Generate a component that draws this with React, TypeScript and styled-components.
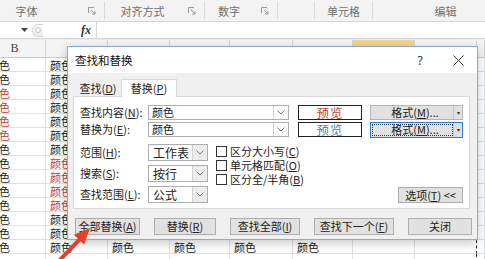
import React from 'react';
import styled, { createGlobalStyle } from 'styled-components';

const GlobalStyle = createGlobalStyle`
  * { box-sizing: border-box; }
  html, body { margin: 0; padding: 0; }
  body {
    width: 485px;
    height: 259px;
    overflow: hidden;
    background: #fff;
    color: #222;
    font-family: "Noto Sans CJK SC", "Noto Sans", sans-serif;
    font-size: 11px;
  }
`;

const Screen = styled.div`
  position: relative;
  width: 485px;
  height: 259px;
  overflow: hidden;
  background: #fff;
`;

/* ribbon group captions */
const RibbonLabels = styled.div`
  display: flex;
  height: 22px;
  background: #f3f3f3;
  border-bottom: 1px solid #d6d6d6;
  overflow: hidden;
`;
const Group = styled.div<{ $w: number; $shift?: number }>`
  flex: 0 0 ${p => p.$w}px;
  margin-left: ${p => p.$shift ?? 0}px;
  display: flex;
  align-items: center;
  border-right: 1px solid #dadada;
  margin-top: 2px;
  margin-bottom: 2px;
`;
const GroupLabel = styled.span`
  flex: 1;
  text-align: center;
  color: #707070;
  font-size: 11px;
  line-height: 14px;
`;
const Launcher = styled.span`
  flex: 0 0 24px;
  display: flex;
  justify-content: center;
`;

/* formula bar */
const FormulaBar = styled.div`
  display: flex;
  align-items: center;
  height: 17px;
  border-bottom: 1px solid #d6d6d6;
  background: #fff;
`;
const NameBox = styled.div`
  width: 30px;
  display: flex;
  justify-content: flex-end;
  padding-right: 2px;
`;
const Pill = styled.span`
  width: 11px;
  height: 13px;
  margin-left: 2px;
  border: 1px solid #d2d2d2;
  border-right: none;
  border-radius: 7px 0 0 7px;
  background: linear-gradient(#fdfdfd, #ececec);
  display: flex;
  align-items: center;
  justify-content: center;
  &::after {
    content: '';
    width: 4px;
    height: 4px;
    border-radius: 50%;
    border: 1px solid #c9c9c9;
  }
`;
const FxBox = styled.div`
  width: 54px;
  height: 100%;
  display: flex;
  align-items: center;
  justify-content: flex-end;
  padding-right: 5px;
  border-right: 1px solid #d6d6d6;
  font-family: "Liberation Serif", serif;
  font-style: italic;
  font-weight: bold;
  font-size: 12px;
  color: #333;
`;
const Gap = styled.div`
  height: 1px;
  background: #ececec;
`;

/* sheet grid: column B starts off-screen, so the row is shifted left */
const cols = '62px 62px 62px 60px 63px 60px 62px 62px 1fr';
const SheetRow = styled.div<{ $h: number }>`
  display: grid;
  grid-template-columns: ${cols};
  height: ${p => p.$h}px;
  margin-left: -16px;
`;
const HeadCell = styled.div<{ $sel?: boolean }>`
  display: flex;
  align-items: center;
  justify-content: center;
  background: ${p => (p.$sel ? '#f3d48c' : '#f4f4f4')};
  border-right: 1px solid #d5d5d5;
  border-bottom: 1px solid #c9c9c9;
  font-family: "Liberation Serif", serif;
  font-size: 12px;
  color: #444;
`;
const Cell = styled.div<{ $red?: boolean; $ants?: boolean }>`
  display: flex;
  align-items: center;
  border-right: ${p => (p.$ants ? '1px dashed #222' : '1px solid #dfe1e2')};
  border-bottom: 1px solid #dfe1e2;
  padding-left: 4px;
  overflow: hidden;
  white-space: nowrap;
  font-size: 11px;
  line-height: 12px;
  color: ${p => (p.$red ? '#c23c3c' : '#222')};
`;

/* dialog */
const Dialog = styled.div`
  position: absolute;
  left: 67px;
  top: 46px;
  width: 411px;
  height: 194px;
  display: flex;
  flex-direction: column;
  background: #f0f0f0;
  border: 1px solid #86acd6;
  box-shadow: 0 3px 10px rgba(0, 0, 0, 0.22);
  font-size: 11px;
  line-height: 13px;
`;
const TitleBar = styled.div`
  display: flex;
  align-items: center;
  height: 26px;
  padding-left: 7px;
  background: #fff;
  color: #111;
`;
const Title = styled.span`
  flex: 1;
  font-size: 11.5px;
`;
const TitleBtn = styled.span`
  width: 38px;
  display: flex;
  justify-content: center;
  align-items: center;
  font-family: "Noto Sans", sans-serif;
  font-size: 12px;
  color: #333;
`;
const Body = styled.div`
  flex: 1;
  display: flex;
  flex-direction: column;
  padding: 5px 7px 0 5px;
`;
const Tabs = styled.div`
  display: flex;
  align-items: flex-end;
  height: 18px;
  position: relative;
  z-index: 1;
`;
const Tab = styled.div<{ $active?: boolean; $w: number }>`
  width: ${p => p.$w}px;
  height: ${p => (p.$active ? 18 : 16)}px;
  margin-left: ${p => (p.$active ? 0 : 2)}px;
  display: flex;
  align-items: center;
  justify-content: center;
  background: ${p => (p.$active ? '#fff' : 'transparent')};
  border: 1px solid ${p => (p.$active ? '#d9d9d9' : 'transparent')};
  border-bottom: none;
  margin-bottom: ${p => (p.$active ? -1 : 0)}px;
`;
const Panel = styled.div`
  height: 113px;
  background: #fff;
  border: 1px solid #d9d9d9;
  padding: 8px 6px 0 6px;
`;
const Row = styled.div`
  display: flex;
  align-items: center;
  height: 15px;
  & + & {
    margin-top: 2px;
  }
`;
const Label = styled.span`
  width: 68px;
  white-space: nowrap;
`;
const Combo = styled.div<{ $w: number }>`
  width: ${p => p.$w}px;
  height: 100%;
  display: flex;
  align-items: center;
  border: 1px solid #abadb3;
  background: #fff;
`;
const ComboText = styled.span<{ $big?: boolean }>`
  flex: 1;
  padding-left: ${p => (p.$big ? 4 : 3)}px;
  font-size: ${p => (p.$big ? 12 : 11)}px;
  white-space: nowrap;
`;
const DropBtn = styled.span<{ $shade?: boolean }>`
  width: 15px;
  height: 100%;
  display: flex;
  align-items: center;
  justify-content: center;
  border-left: 1px solid #d4d4d4;
  background: ${p => (p.$shade ? '#ececec' : '#fff')};
`;
const Preview = styled.div<{ $color: string }>`
  width: 64px;
  height: 100%;
  margin-left: 9px;
  display: flex;
  align-items: center;
  justify-content: center;
  border: 1px solid #222;
  background: #fff;
  color: ${p => p.$color};
  font-size: 12.5px;
  letter-spacing: 1px;
`;
const FormatBtn = styled.div<{ $focus?: boolean }>`
  position: relative;
  width: 93px;
  height: ${p => (p.$focus ? 16 : 15)}px;
  margin-left: 8px;
  display: flex;
  align-items: center;
  background: #e1e1e1;
  border: 1px solid ${p => (p.$focus ? '#2a7fd4' : '#b4b4b4')};
  &::after {
    content: '';
    display: ${p => (p.$focus ? 'block' : 'none')};
    position: absolute;
    inset: 1px 9px 1px 1px;
    border: 1px dotted #333;
  }
`;
const FormatText = styled.span`
  flex: 1;
  text-align: center;
  padding-left: 6px;
  white-space: nowrap;
`;
const FormatDrop = styled.span`
  width: 9px;
  height: 100%;
  display: flex;
  align-items: center;
  justify-content: center;
  border-left: 1px solid #c8c8c8;
  font-size: 6px;
  color: #333;
`;
const Options = styled.div`
  display: flex;
  margin-top: 7px;
  height: 59px;
`;
const OptColumn = styled.div`
  display: flex;
  flex-direction: column;
  gap: 4px;
`;
const OptRow = styled.div`
  display: flex;
  align-items: center;
  height: 17px;
`;
const Checks = styled.div`
  display: flex;
  flex-direction: column;
  gap: 3px;
  margin-left: 8px;
  padding-top: 2px;
`;
const CheckRow = styled.div`
  display: flex;
  align-items: center;
  height: 11px;
  gap: 3px;
  white-space: nowrap;
`;
const Box = styled.span`
  width: 11px;
  height: 11px;
  border: 1px solid #333;
  background: #fff;
`;
const Button = styled.div<{ $w: number }>`
  width: ${p => p.$w}px;
  height: 17px;
  display: flex;
  align-items: center;
  justify-content: center;
  background: #e1e1e1;
  border: 1px solid #adadad;
  white-space: nowrap;
`;
const OptionsBtn = styled(Button)`
  margin-left: auto;
  align-self: flex-end;
  height: 16px;
`;
const ButtonRow = styled.div`
  display: flex;
  justify-content: space-between;
  margin: 9px -2px 0 2px;
`;
const Arrow = styled.svg`
  position: absolute;
  left: 50px;
  top: 222px;
`;

const Chevron = () => (
  <svg width="8" height="5" viewBox="0 0 8 5">
    <polyline points="0.5,0.5 4,4 7.5,0.5" fill="none" stroke="#777" strokeWidth="1" />
  </svg>
);

const LaunchIcon = () => (
  <svg width="8" height="8" viewBox="0 0 8 8">
    <path d="M0.5 6V0.5H6" fill="none" stroke="#999" />
    <path d="M3 3L7 7M7 4v3H4" fill="none" stroke="#999" />
  </svg>
);

const Mn: React.FC<{ k: string }> = ({ k }) => (
  <>
    (<u>{k}</u>)
  </>
);

const groups = [
  { w: 132, shift: -27, label: '字体', launch: true },
  { w: 100, label: '对齐方式', launch: true },
  { w: 73, label: '数字', launch: true },
  { w: 37, label: '' },
  { w: 58, label: '单元格' },
  { w: 146, label: '编辑' },
];

const heads = ['B', '', '', '', '', '', '', '', ''];

const selects = [
  { label: '范围', k: 'H', value: '工作表' },
  { label: '搜索', k: 'S', value: '按行' },
  { label: '查找范围', k: 'L', value: '公式' },
];

const checks = [
  { label: '区分大小写', k: 'C' },
  { label: '单元格匹配', k: 'O' },
  { label: '区分全/半角', k: 'B' },
];

const actions = [
  { label: '全部替换', k: 'A', w: 65 },
  { label: '替换', k: 'R', w: 62 },
  { label: '查找全部', k: 'I', w: 70 },
  { label: '查找下一个', k: 'F', w: 80 },
  { label: '关闭', w: 64 },
];

// rows above this one sit under the dialog except for columns B and C
const LAST_ROW = 13;

export default function App() {
  const rows = Array.from({ length: 15 }, (_, i) => i);
  return (
    <Screen>
      <GlobalStyle />
      <RibbonLabels>
        {groups.map((g, i) => (
          <Group key={i} $w={g.w} $shift={g.shift}>
            <GroupLabel>{g.label}</GroupLabel>
            {g.launch && (
              <Launcher>
                <LaunchIcon />
              </Launcher>
            )}
          </Group>
        ))}
      </RibbonLabels>
      <FormulaBar>
        <NameBox>
          <svg width="7" height="4" viewBox="0 0 7 4">
            <polygon points="0,0 7,0 3.5,4" fill="#444" />
          </svg>
        </NameBox>
        <Pill />
        <FxBox>fx</FxBox>
      </FormulaBar>
      <Gap />
      <SheetRow $h={18}>
        {heads.map((h, i) => (
          <HeadCell key={i} $sel={i === 6}>
            {h}
          </HeadCell>
        ))}
      </SheetRow>
      {rows.map(r => {
        const filled = r <= LAST_ROW;
        const below = r === LAST_ROW;
        return (
          <SheetRow key={r} $h={14}>
            <Cell $red={r >= 2 && r <= 5}>{filled && '颜色'}</Cell>
            <Cell $red={r >= 7 && r <= 10}>{filled && '颜色'}</Cell>
            <Cell>{below && '颜色'}</Cell>
            <Cell>{below && '颜色'}</Cell>
            <Cell>{below && '颜色'}</Cell>
            <Cell>{below && '颜色'}</Cell>
            <Cell />
            <Cell $ants />
            <Cell />
          </SheetRow>
        );
      })}

      <Dialog>
        <TitleBar>
          <Title>查找和替换</Title>
          <TitleBtn>?</TitleBtn>
          <TitleBtn>
            <svg width="11" height="11" viewBox="0 0 11 11">
              <path d="M0.5 0.5L10.5 10.5M10.5 0.5L0.5 10.5" stroke="#333" strokeWidth="1" />
            </svg>
          </TitleBtn>
        </TitleBar>
        <Body>
          <Tabs>
            <Tab $w={46}>
              查找<Mn k="D" />
            </Tab>
            <Tab $w={56} $active>
              替换<Mn k="P" />
            </Tab>
          </Tabs>
          <Panel>
            <Row>
              <Label>
                查找内容<Mn k="N" />:
              </Label>
              <Combo $w={141}>
                <ComboText>颜色</ComboText>
                <DropBtn>
                  <Chevron />
                </DropBtn>
              </Combo>
              <Preview $color="#c0413f">预览</Preview>
              <FormatBtn>
                <FormatText>
                  格式<Mn k="M" />...
                </FormatText>
                <FormatDrop>▾</FormatDrop>
              </FormatBtn>
            </Row>
            <Row>
              <Label>
                替换为<Mn k="E" />:
              </Label>
              <Combo $w={141}>
                <ComboText>颜色</ComboText>
                <DropBtn>
                  <Chevron />
                </DropBtn>
              </Combo>
              <Preview $color="#3a8db5">预览</Preview>
              <FormatBtn $focus>
                <FormatText>
                  格式<Mn k="M" />...
                </FormatText>
                <FormatDrop>▾</FormatDrop>
              </FormatBtn>
            </Row>
            <Options>
              <OptColumn>
                {selects.map(s => (
                  <OptRow key={s.k}>
                    <Label>
                      {s.label}
                      <Mn k={s.k} />:
                    </Label>
                    <Combo $w={60}>
                      <ComboText $big>{s.value}</ComboText>
                      <DropBtn $shade>
                        <Chevron />
                      </DropBtn>
                    </Combo>
                  </OptRow>
                ))}
              </OptColumn>
              <Checks>
                {checks.map(c => (
                  <CheckRow key={c.k}>
                    <Box />
                    <span>
                      {c.label}
                      <Mn k={c.k} />
                    </span>
                  </CheckRow>
                ))}
              </Checks>
              <OptionsBtn $w={65}>
                选项<Mn k="T" />&nbsp;&lt;&lt;
              </OptionsBtn>
            </Options>
          </Panel>
          <ButtonRow>
            {actions.map(a => (
              <Button key={a.label} $w={a.w}>
                {a.label}
                {a.k && <Mn k={a.k} />}
              </Button>
            ))}
          </ButtonRow>
        </Body>
      </Dialog>

      <Arrow width="45" height="37" viewBox="0 0 45 37">
        <line x1="8" y1="40" x2="30" y2="17" stroke="#e5402b" strokeWidth="4" />
        <polygon points="40,6 23.9,12.8 34.1,22.4" fill="#e5402b" />
      </Arrow>
    </Screen>
  );
}
